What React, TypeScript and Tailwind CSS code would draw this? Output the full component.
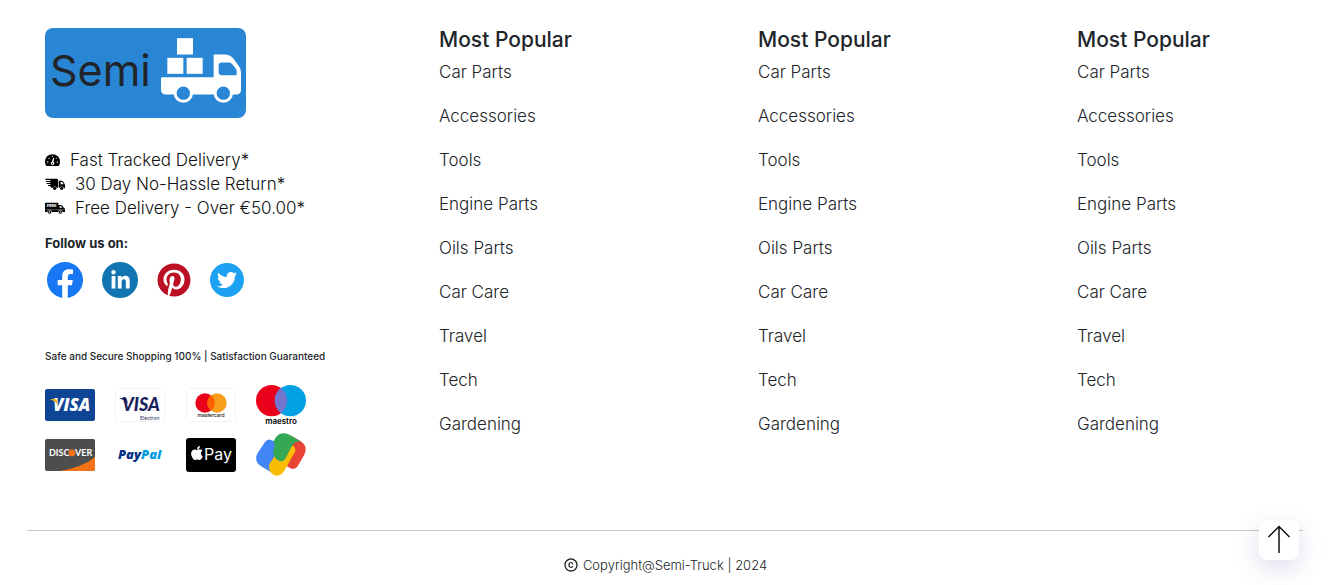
import React from "react";
import { FaApple, FaLinkedinIn, FaPinterest, FaTwitter } from "react-icons/fa";
import { MdCopyright } from "react-icons/md";

const links = [
  "Car Parts",
  "Accessories",
  "Tools",
  "Engine Parts",
  "Oils Parts",
  "Car Care",
  "Travel",
  "Tech",
  "Gardening",
];

function LogoTruck() {
  return (
    <svg viewBox="0 0 240 194" className="h-[65px] w-20" aria-hidden="true">
      <g fill="#fff">
        <rect x="48" y="0" width="48" height="49" />
        <rect x="19" y="59" width="48" height="48" />
        <rect x="77" y="59" width="48" height="48" />
        <path
          fillRule="evenodd"
          d="M4 117H158V49H190Q207 49 217 61L234 84Q240 92 240 102V154Q240 169 225 169H15Q0 169 0 154V121Q0 117 4 117ZM182 73Q173 73 173 82V102Q173 111 182 111H227V100Q227 96 224 91L214 78Q210 73 204 73Z"
        />
        <circle cx="67" cy="165" r="29" />
        <circle cx="187" cy="165" r="29" />
      </g>
      <circle cx="67" cy="165" r="20" fill="#2986d5" />
      <circle cx="187" cy="165" r="20" fill="#2986d5" />
    </svg>
  );
}

function SpeedIcon() {
  return (
    <svg viewBox="0 0 45 36" className="h-3 w-[15px] shrink-0" aria-hidden="true">
      <path d="M4 36Q0 31 0 23A22.500 22.500 0 0 1 45 23Q45 31 41 36Z" />
      <g fill="#fff">
        <circle cx="8" cy="24" r="2" />
        <circle cx="12" cy="13" r="2" />
        <circle cx="22" cy="7" r="2" />
        <circle cx="37" cy="24" r="2" />
        <circle cx="34" cy="13" r="1.500" />
        <path d="M25 11L28 12L25 24A5 5 0 1 1 20 24Z" />
      </g>
      <circle cx="22" cy="29" r="2" />
    </svg>
  );
}

function FastTruckIcon() {
  return (
    <svg viewBox="0 0 60 36" className="h-3 w-5 shrink-0" aria-hidden="true">
      <path d="M1 2H36Q39 2 39 5V29H35A6 6 0 0 0 24 29H19L15 24H9V21H16V18H5V15H16V12H3V9H16V6H1Z" />
      <path
        fillRule="evenodd"
        d="M41 8H50Q53 8 55 11L60 20V31H57A7 7 0 0 0 44 29H41ZM47 12V19H56L52 12Z"
      />
      <circle cx="29" cy="31" r="5" />
      <circle cx="50" cy="31" r="5" />
    </svg>
  );
}

function FreeTruckIcon() {
  return (
    <svg viewBox="0 0 60 36" className="h-3 w-5 shrink-0" aria-hidden="true">
      <path d="M2 2H40V9H48Q51 9 53 12L56 17Q60 18 60 22V30H0V4Q0 2 2 2Z" />
      <path d="M44 12H48L52 17H44Z" fill="#fff" />
      <text x="5" y="15" fill="#fff" fontSize="12" fontWeight="800" fontStyle="italic" fontFamily="Inter, sans-serif">
        FREE
      </text>
      <path d="M1 23H59" stroke="#fff" strokeWidth="1" />
      <g stroke="#fff" strokeWidth="1.500">
        <circle cx="14" cy="30" r="6" />
        <circle cx="46" cy="30" r="6" />
      </g>
      <circle cx="14" cy="30" r="2" fill="#fff" />
      <circle cx="46" cy="30" r="2" fill="#fff" />
    </svg>
  );
}

function FacebookIcon() {
  return (
    <svg viewBox="0 0 24 24" className="size-9" fill="#1877f2" aria-hidden="true">
      <path d="M24 12.073c0-6.627-5.373-12-12-12s-12 5.373-12 12c0 5.990 4.388 10.954 10.125 11.854v-8.385H7.078v-3.470h3.047V9.430c0-3.007 1.792-4.669 4.533-4.669 1.312 0 2.686.235 2.686.235v2.953H15.830c-1.491 0-1.956.925-1.956 1.874v2.250h3.328l-.532 3.470h-2.796v8.385C19.612 23.027 24 18.062 24 12.073z" />
    </svg>
  );
}

function Visa() {
  return (
    <svg viewBox="0 0 50 32" className="w-[50px]" role="img" aria-label="Visa">
      <rect width="50" height="32" rx="2" fill="#0e4595" />
      <text x="8" y="22" fill="#fff" fontSize="17" fontWeight="800" fontStyle="italic" fontFamily="'Open Sans', sans-serif">
        VISA
      </text>
      <path d="M5 10H10Q12 10 12 12L13 16Q10 12 5 10Z" fill="#f2ae14" />
    </svg>
  );
}

function VisaElectron() {
  return (
    <svg viewBox="0 0 50 34" className="w-[50px]" role="img" aria-label="Visa Electron">
      <rect x=".5" y=".5" width="49" height="33" rx="3" fill="#fff" stroke="#f3f3f5" />
      <text x="7" y="23" fill="#191e5e" fontSize="18" fontWeight="900" fontStyle="italic" fontFamily="Lato, sans-serif">
        VISA
      </text>
      <path d="M4 10H10Q12 10 12 12L13 16Q10 12 4 10Z" fill="#191e5e" />
      <text x="25" y="32" fill="#191e5e" fontSize="5" fontFamily="Inter, sans-serif">
        Electron
      </text>
    </svg>
  );
}

function Mastercard() {
  return (
    <svg viewBox="0 0 50 34" className="w-[50px]" role="img" aria-label="Mastercard">
      <rect x=".5" y=".5" width="49" height="33" rx="3" fill="#fff" stroke="#f3f3f5" />
      <circle cx="19" cy="15" r="9.700" fill="#eb001b" />
      <circle cx="31" cy="15" r="9.700" fill="#f79e1b" />
      <path d="M25 7.400A9.700 9.700 0 0 1 25 22.600A9.700 9.700 0 0 1 25 7.400Z" fill="#ff5f00" />
      <text x="25" y="29" textAnchor="middle" fill="#111" fontSize="5" fontWeight="500" fontFamily="Inter, sans-serif">
        mastercard
      </text>
    </svg>
  );
}

function Maestro() {
  return (
    <svg viewBox="0 0 50 40" className="w-[50px]" role="img" aria-label="Maestro">
      <circle cx="15.600" cy="15.600" r="15.600" fill="#eb001b" />
      <circle cx="34.400" cy="15.600" r="15.600" fill="#00a2e5" />
      <path d="M25 3.100A15.600 15.600 0 0 1 25 28.100A15.600 15.600 0 0 1 25 3.100Z" fill="#7375cf" />
      <text x="25" y="39" textAnchor="middle" fill="#000" fontSize="8" fontWeight="600" fontFamily="Inter, sans-serif">
        maestro
      </text>
    </svg>
  );
}

function Discover() {
  return (
    <svg viewBox="0 0 50 32" className="w-[50px]" role="img" aria-label="Discover">
      <rect width="50" height="32" rx="2" fill="#4d4d4d" />
      <path d="M50 18V30Q50 32 48 32H15Q38 28 50 18Z" fill="#f47216" />
      <g fill="#fff" fontSize="9" fontWeight="700" fontFamily="Lato, sans-serif">
        <text x="4" y="17">DISC</text>
        <text x="30" y="17">VER</text>
      </g>
      <circle cx="27" cy="14" r="3.400" fill="#f47216" />
    </svg>
  );
}

function PayPal() {
  return (
    <svg viewBox="0 0 50 32" className="w-[50px]" role="img" aria-label="PayPal">
      <text x="3" y="20" fontSize="13" fontWeight="800" fontStyle="italic" fontFamily="'Open Sans', sans-serif">
        <tspan fill="#003087">Pay</tspan>
        <tspan fill="#009cde">Pal</tspan>
      </text>
    </svg>
  );
}

function ApplePay() {
  return (
    <svg viewBox="0 0 50 34" className="w-[50px]" role="img" aria-label="Apple Pay">
      <rect width="50" height="34" rx="3" fill="#000" />
      <FaApple x="3" y="7" width="14" height="16" color="#fff" />
      <text x="18" y="22" fill="#fff" fontSize="16" fontFamily="Inter, sans-serif">
        Pay
      </text>
    </svg>
  );
}

function GooglePay() {
  return (
    <svg viewBox="0 0 150 129" className="w-[50px]" role="img" aria-label="Google Pay">
      <path d="M100 5L133 24Q157 39 145 65L125 100Q116 112 102 105L92 99L116 45L100 30Z" fill="#ea4335" />
      <path d="M98 32L112 40Q121 46 117 56L86 112Q72 135 52 125Q34 114 38 92L62 66Z" fill="#fbbc04" />
      <path d="M27 27Q35 16 46 21L66 32L66 84Q46 79 40 94Q37 106 43 116L19 102Q-9 86 5 60Z" fill="#4285f4" />
      <path d="M40 95L57 66L78 80L66 101Z" fill="#fbbc04" />
      <path d="M57 17Q72-8 100 5L136 26Q118 22 108 38L88 77Q80 88 68 83Q46 70 54 47Q60 36 52 25Z" fill="#34a853" />
    </svg>
  );
}

function LinkColumn() {
  return (
    <div className="pl-[93px]">
      <h2 className="text-[21px] leading-6 font-medium">Most Popular</h2>
      <ul className="mt-2 flex flex-col gap-5">
        {links.map((label) => (
          <li key={label} className="text-[17px] leading-6 font-light">
            <a href="#">{label}</a>
          </li>
        ))}
      </ul>
    </div>
  );
}

export default function App() {
  return (
    <footer className="bg-white pt-7 pr-[30px] pb-2 pl-[27px] font-['Inter',sans-serif] text-base text-[#212529]">
      <div className="grid grid-cols-4">
        <div className="pl-[18px]">
          <a
            href="#"
            aria-label="Semi"
            className="flex h-[90px] w-[201px] items-center justify-between rounded-lg bg-[#2986d5] pr-[5px] pb-1.5 pl-[5px]"
          >
            <span className="text-[43px] leading-[48px]">Semi</span>
            <LogoTruck />
          </a>

          <ul className="mt-[30px] text-[17px] leading-6 font-light text-[#111]">
            <li className="flex items-center gap-2.5 whitespace-nowrap">
              <SpeedIcon />
              Fast Tracked Delivery*
            </li>
            <li className="flex items-center gap-2.5 whitespace-nowrap">
              <FastTruckIcon />
              30 Day No-Hassle Return*
            </li>
            <li className="flex items-center gap-2.5 whitespace-nowrap">
              <FreeTruckIcon />
              Free Delivery - Over €50.00*
            </li>
          </ul>

          <h3 className="mt-[15px] text-[13px] leading-4 font-bold">Follow us on:</h3>
          <div className="mt-[11px] flex h-9 items-center gap-[19px] pl-0.5">
            <a href="#" aria-label="Facebook">
              <FacebookIcon />
            </a>
            <a
              href="#"
              aria-label="LinkedIn"
              className="flex size-9 items-center justify-center rounded-full bg-[#1275b1] text-white"
            >
              <FaLinkedinIn size={21} />
            </a>
            <a href="#" aria-label="Pinterest" className="text-[#bb0f23]">
              <FaPinterest size={34} />
            </a>
            <a
              href="#"
              aria-label="Twitter"
              className="flex size-[34px] items-center justify-center rounded-full bg-[#1da1f2] text-white"
            >
              <FaTwitter size={20} />
            </a>
          </div>

          <p className="mt-[50px] text-[10px] leading-4 font-medium whitespace-nowrap">
            Safe and Secure Shopping 100% | Satisfaction Guaranteed
          </p>
          <div className="mt-[21px] grid w-[261px] grid-cols-[repeat(4,50px)] items-center justify-between gap-y-2">
            <Visa />
            <VisaElectron />
            <Mastercard />
            <Maestro />
            <Discover />
            <PayPal />
            <ApplePay />
            <GooglePay />
          </div>
        </div>
        <LinkColumn />
        <LinkColumn />
        <LinkColumn />
      </div>

      <hr className="mt-[54px] border-[#c8c9ca]" />
      <p className="mt-6 flex items-center justify-center gap-1 text-[13px] leading-5 font-light">
        <MdCopyright size={16} />
        Copyright@Semi-Truck | 2024
      </p>

      <button
        type="button"
        aria-label="Back to top"
        className="fixed right-[34px] bottom-[25px] flex size-10 items-center justify-center rounded-lg bg-white shadow-[0_8px_24px_rgba(70,60,150,0.18)]"
      >
        <svg viewBox="0 0 24 30" className="h-[30px] w-6" fill="none" stroke="#111" strokeWidth="1.500" aria-hidden="true">
          <path d="M12 1V28M1.500 12L12 1.500L22.500 12" />
        </svg>
      </button>
    </footer>
  );
}
